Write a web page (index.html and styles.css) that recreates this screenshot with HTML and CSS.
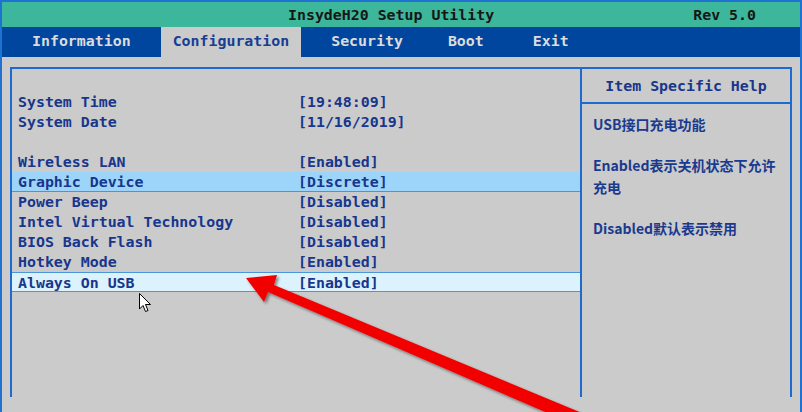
FILE: index.html
```html
<!DOCTYPE html>
<html lang="zh-CN">
<head>
    <meta charset="UTF-8">
    <title>InsydeH20 Setup Utility</title>
    <link rel="stylesheet" href="styles.css">
</head>
<body>

    <div class="screen">
        <div class="titlebar">
            <span class="title">InsydeH20 Setup Utility</span>
            <span class="rev">Rev 5.0</span>
        </div>
        <ul class="tabs">
            <li>Information</li>
            <li class="active">Configuration</li>
            <li>Security</li>
            <li class="boot">Boot</li>
            <li class="last">Exit</li>
        </ul>
        <div class="main">
            <div class="settings">
                <div class="row"><span class="label">System Time</span><span class="value">[19:48:09]</span></div>
                <div class="row"><span class="label">System Date</span><span class="value">[11/16/2019]</span></div>
                <div class="row"></div>
                <div class="row"><span class="label">Wireless LAN</span><span class="value">[Enabled]</span></div>
                <div class="row sel"><span class="label">Graphic Device</span><span class="value">[Discrete]</span></div>
                <div class="row"><span class="label">Power Beep</span><span class="value">[Disabled]</span></div>
                <div class="row"><span class="label">Intel Virtual Technology</span><span class="value">[Disabled]</span></div>
                <div class="row"><span class="label">BIOS Back Flash</span><span class="value">[Disabled]</span></div>
                <div class="row"><span class="label">Hotkey Mode</span><span class="value">[Enabled]</span></div>
                <div class="row focus"><span class="label">Always On USB</span><span class="value">[Enabled]</span></div>
            </div>
            <div class="help">
                <div class="help-head">Item Specific Help</div>
                <div class="help-body">
                    <p>USB接口充电功能</p>
                    <p>Enabled表示关机状态下允许<br>充电</p>
                    <p>Disabled默认表示禁用</p>
                </div>
            </div>
        </div>

        <svg class="overlay" width="802" height="412" viewBox="0 0 802 412">
            <defs>
                <filter id="shadow" x="-10%" y="-10%" width="130%" height="130%">
                    <feDropShadow dx="2" dy="2" stdDeviation="1.5" flood-color="#000" flood-opacity="0.45"/>
                </filter>
            </defs>
            <!-- red annotation arrow -->
            <path d="M246 278 L277 275 L274 285 L647 440 L610 440 L268 292 L264 302 Z" fill="#f20000" filter="url(#shadow)"/>
            <!-- mouse pointer -->
            <path d="M139.5 293.5 L139.5 309 L143 305.5 L145.5 311.5 L148 310.5 L145.5 304.5 L150.5 304.5 Z" fill="#fff" stroke="#000" stroke-width="1" stroke-linejoin="round"/>
        </svg>
    </div>

</body>
</html>
```

FILE: styles.css
```css
*{
    margin: 0;
    padding: 0;
}
body{
    background: #cbcbcb;
}
.screen{
    position: relative;
    width: 802px;
    height: 412px;
    box-sizing: border-box;
    border: 2px solid #1f72d2;
    border-bottom: none;
    overflow: hidden;
    background: #cbcbcb;
    font-family: "DejaVu Sans Mono", "Liberation Mono", monospace;
    font-weight: bold;
    font-size: 14.9px;
}
.titlebar{
    display: flex;
    height: 25px;
    line-height: 26px;
    padding: 0 44px 0 286px;
    background: #3db79b;
    color: #161616;
}
.rev{
    margin-left: auto;
}
.tabs{
    display: flex;
    gap: 18px;
    height: 30px;
    line-height: 29px;
    padding-left: 18px;
    list-style: none;
    background: #00469f;
    color: #dcdcdc;
}
.tabs li{
    padding: 0 12px;
}
.tabs .boot{
    margin-left: 3px;
}
.tabs .last{
    margin-left: 7px;
}
.tabs .active{
    background: #cbcbcb;
    color: #163e93;
}
.main{
    display: grid;
    grid-template-columns: 572px 210px;
    height: 330px;
    padding: 10px 0 0 8px;
    color: #17368c;
}
.settings{
    border: 2px solid #1f6ad0;
    border-bottom: none;
    padding-top: 23px;
}
.row{
    display: flex;
    height: 20px;
    line-height: 20px;
    box-sizing: border-box;
    padding-left: 6px;
}
.row .label{
    width: 280px;
}
.sel{
    background: #9dd5fa;
    border-bottom: 1px solid #4f93d6;
}
.focus{
    background: #dcf2fc;
    border-top: 1px solid #4a95dc;
    border-bottom: 1px solid #4a95dc;
}
.help{
    border-top: 2px solid #1f6ad0;
    border-right: 2px solid #1f6ad0;
}
.help-head{
    height: 33px;
    line-height: 35px;
    text-align: center;
    border-bottom: 2px solid #1f6ad0;
}
.help-body{
    padding: 9px 0 0 11px;
    font-family: "Noto Sans CJK SC", "Noto Sans", sans-serif;
    font-size: 14px;
    font-weight: 700;
    line-height: 22px;
    color: #1a3a8e;
}
.help-body p{
    margin-bottom: 19px;
}
.overlay{
    position: absolute;
    left: -2px;
    top: -2px;
    pointer-events: none;
}
```
